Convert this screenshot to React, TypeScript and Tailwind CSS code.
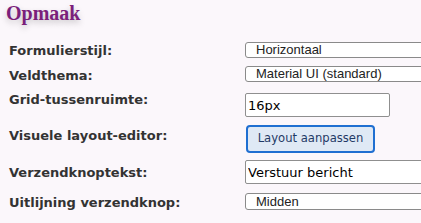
import type { ReactNode } from 'react';

const label = 'w-[236px] shrink-0 font-["DejaVu_Sans",Verdana,sans-serif] text-[13px] leading-[16px] font-bold text-[#333]';
const selectCls =
  'h-[16px] w-[300px] shrink-0 appearance-none rounded-[3px] border border-[#8a8a8a] bg-white pl-[10px] font-["Liberation_Sans",Arial,sans-serif] text-[13px] leading-[14px] text-[#222] outline-none';
const inputCls =
  'h-[24px] shrink-0 rounded-[2px] border border-[#8f8f8f] bg-white px-[2px] font-["DejaVu_Sans",Verdana,sans-serif] text-[13px] text-black outline-none';

function Row({ name, h, mt, shift = 'pt-[2px]', children }: { name: string; h: string; mt: string; shift?: string; children: ReactNode }) {
  return (
    <div className={`flex items-center ${h} ${mt}`}>
      <div className={`${label} ${shift}`}>{name}</div>
      {children}
    </div>
  );
}

function App() {
  return (
    <div className="h-[223px] w-[421px] overflow-hidden bg-[#fbf7fb]">
      <h2 className="pl-[6px] pt-[1px] font-['Liberation_Serif','Times_New_Roman',serif] text-[20px] leading-[24px] font-bold text-[#7b1f7b] [text-shadow:0_3px_6px_rgba(0,0,0,0.22)]">
        Opmaak
      </h2>
      <div className="pl-[9px]">
        <Row name="Formulierstijl:" h="h-[18px]" mt="mt-[16px]">
          <select className={selectCls} defaultValue="h">
            <option value="h">Horizontaal</option>
          </select>
        </Row>
        <Row name="Veldthema:" h="h-[18px]" mt="mt-[6px]" shift="pt-[4px]">
          <select className={selectCls} defaultValue="m">
            <option value="m">Material UI (standard)</option>
          </select>
        </Row>
        <Row name="Grid-tussenruimte:" h="h-[24px]" mt="mt-[10px]" shift="pb-[10px]">
          <input className={`${inputCls} w-[145px]`} defaultValue="16px" />
        </Row>
        <Row name="Visuele layout-editor:" h="h-[28px]" mt="mt-[8px]" shift="pb-[6px]">
          <button className="ml-[1px] h-[28px] w-[129px] shrink-0 rounded-[4px] border-2 border-[#1f6fd1] bg-[#dfe9f5] font-['DejaVu_Sans',Verdana,sans-serif] text-[11.6px] text-[#1f3a66]">
            Layout aanpassen
          </button>
        </Row>
        <Row name="Verzendknoptekst:" h="h-[24px]" mt="mt-[7px]">
          <input className={`${inputCls} w-[300px]`} defaultValue="Verstuur bericht" />
        </Row>
        <Row name="Uitlijning verzendknop:" h="h-[17px]" mt="mt-[9px]">
          <select className={`${selectCls} h-[17px]`} defaultValue="m">
            <option value="m">Midden</option>
          </select>
        </Row>
      </div>
    </div>
  );
}

export default App;
